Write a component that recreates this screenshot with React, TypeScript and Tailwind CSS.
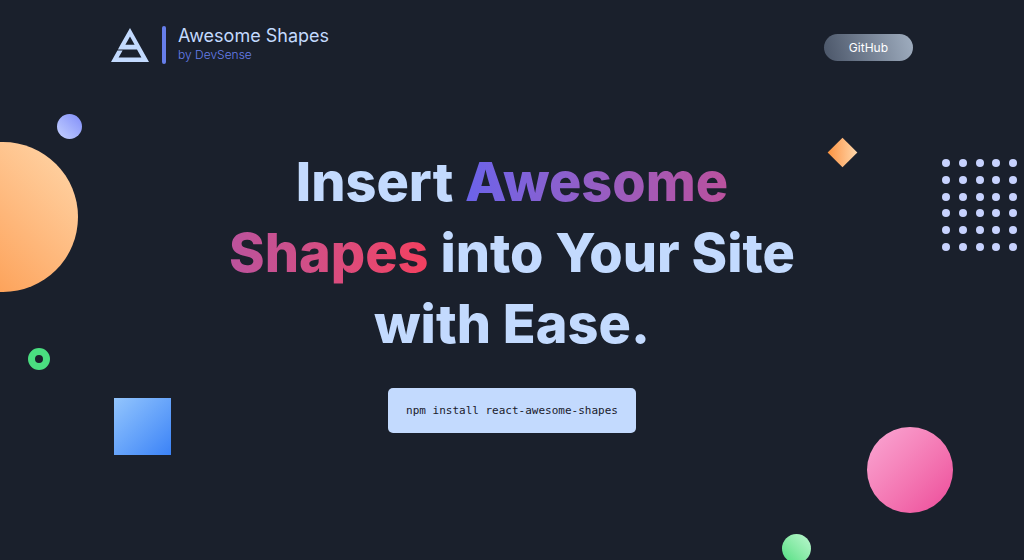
function Logo() {
  return (
    <svg className="h-[34px] w-[38px]" viewBox="0 0 38 34" aria-hidden="true">
      <path
        fill="#c3dafe"
        fillRule="evenodd"
        d="M19 0 38 34H0L6.4 22.4H11.6L7.6 29.4H30.4L26 21.4H13L6.9 21.4 9.6 16.4ZM19 8.4 14.4 16.8H23.6Z"
      />
    </svg>
  );
}

function DotGrid() {
  const cells = Array.from({ length: 30 }, (_, i) => i);
  return (
    <div className="absolute top-[159px] right-[7px] grid h-[92px] w-[75px] grid-cols-[repeat(5,8px)] content-between justify-between">
      {cells.map((cell) => (
        <span key={cell} className="size-2 rounded-full bg-[#c7d2fe]" />
      ))}
    </div>
  );
}

function Shapes() {
  return (
    <div aria-hidden="true" className="pointer-events-none absolute inset-0 overflow-hidden">
      <div className="absolute top-[142px] -left-[72px] size-[150px] rounded-full bg-linear-to-tr from-[#fb923c] to-[#fed7aa]" />
      <div className="absolute top-[114px] left-[57px] size-[25px] rounded-full bg-linear-to-bl from-[#818cf8] to-[#c7d2fe]" />
      <div className="absolute top-[348px] left-7 size-[22px] rounded-full border-[7px] border-[#4ade80]" />
      <div className="absolute top-[398px] left-[114px] size-[57px] bg-linear-to-br from-[#93c5fd] to-[#3b82f6]" />
      <div className="absolute top-[142px] right-[171px] size-[21px] rotate-45 bg-linear-to-tr from-[#fb923c] to-[#fed7aa]" />
      <DotGrid />
      <div className="absolute top-[427px] right-[71px] size-[86px] rounded-full bg-linear-to-br from-[#f9a8d4] to-[#ec4899]" />
      <div className="absolute top-[534px] right-[213px] size-[29px] rounded-full bg-linear-to-tr from-[#4ade80] to-[#bbf7d0]" />
    </div>
  );
}

export default function App() {
  return (
    <div className="relative min-h-screen overflow-hidden bg-[#1a202c] font-['Inter',sans-serif] text-[#c3dafe]">
      <Shapes />
      <div className="relative mx-auto max-w-[802px]">
        <header className="flex items-center justify-between pt-[26px]">
          <div className="flex items-center">
            <Logo />
            <span className="ml-[13px] h-[38px] w-1 rounded-full bg-[#667eea]" />
            <div className="ml-3">
              <p className="text-lg leading-5">Awesome Shapes</p>
              <p className="text-xs leading-[18px] font-light text-[#667eea]">by DevSense</p>
            </div>
          </div>
          <a
            href="https://github.com"
            className="mt-1 rounded-full bg-linear-[75deg] from-[#4a5568] to-[#a0aec0] px-[25px] text-xs leading-[27px] text-white"
          >
            GitHub
          </a>
        </header>
        <main className="flex flex-col items-center pt-[82px] pb-16">
          <h1 className="max-w-[620px] text-center text-[54px] leading-[71px] font-extrabold">
            Insert{" "}
            <span className="bg-linear-to-r from-[#6b63ea] via-[#b253a6] to-[#f43f5e] bg-clip-text text-transparent">
              Awesome Shapes
            </span>{" "}
            into Your Site with Ease.
          </h1>
          <code className="mt-[29px] rounded-[5px] bg-[#c3dafe] px-[18px] font-['DejaVu_Sans_Mono',monospace] text-[11px] leading-[45px] text-[#1a202c]">
            npm install react-awesome-shapes
          </code>
        </main>
      </div>
    </div>
  );
}
